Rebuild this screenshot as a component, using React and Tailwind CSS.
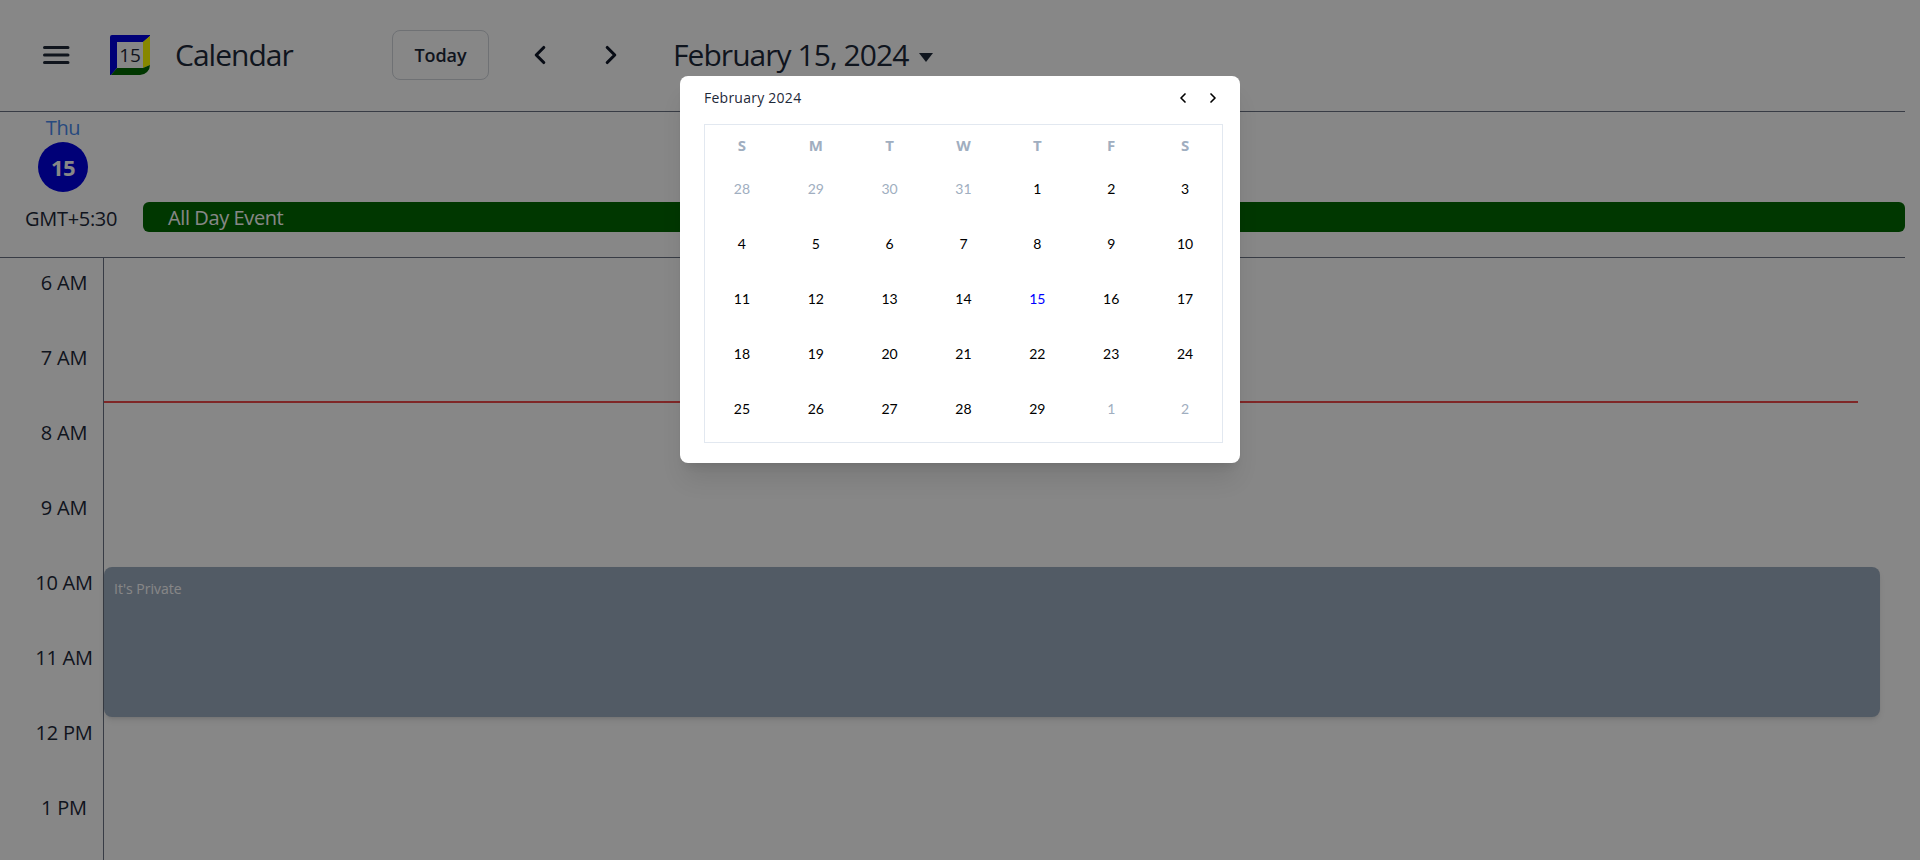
import React from "react";
import { ChevronLeft, ChevronRight } from "lucide-react";

const hours = ["6 AM", "7 AM", "8 AM", "9 AM", "10 AM", "11 AM", "12 PM", "1 PM"];
const dayNames = ["S", "M", "T", "W", "T", "F", "S"];

// muted = days outside of the current month
const days = [
  [28, 1], [29, 1], [30, 1], [31, 1], [1], [2], [3],
  [4], [5], [6], [7], [8], [9], [10],
  [11], [12], [13], [14], [15], [16], [17],
  [18], [19], [20], [21], [22], [23], [24],
  [25], [26], [27], [28], [29], [1, 1], [2, 1],
];

const Logo = () => (
  <svg width="40" height="40" viewBox="0 0 40 40" className="shrink-0">
    <path d="M2 0H40V1L33 7H7V33L1 40H0V2a2 2 0 0 1 2-2Z" fill="#0000e0" />
    <path d="M40 1V30L33 33V7Z" fill="#ffff00" />
    <path d="M7 33H33L40 30a10 10 0 0 1-10 10H1Z" fill="#006800" />
    <text x="20" y="27" textAnchor="middle" fontSize="19" fill="#1f2937" fontFamily="Open Sans, sans-serif">15</text>
  </svg>
);

const DatePopup = () => (
  <div className="absolute left-[680px] top-[76px] w-[560px] h-[387px] bg-white rounded-lg shadow-xl pl-6 pr-[17px]">
    <div className="flex items-center justify-between h-[48px] pr-[2px] pb-[4px]">
      <span className="text-sm text-gray-800 tracking-[0.25px]">February 2024</span>
      <div className="flex items-center gap-[14px] text-black">
        <ChevronLeft size={16} strokeWidth={2.5} />
        <ChevronRight size={16} strokeWidth={2.5} />
      </div>
    </div>
    <div className="h-[319px] border border-slate-200">
      <div className="grid grid-cols-7 h-[41px] items-center">
        {dayNames.map((d, i) => (
          <span key={i} className="text-center text-[15px] font-bold text-[#a0aec0]">{d}</span>
        ))}
      </div>
      <div className="grid grid-cols-7 auto-rows-[55px] items-start">
        {days.map(([num, muted], i) => (
          <span
            key={i}
            className={`text-center text-sm font-['Lato',sans-serif] leading-[20px] pt-[13px] ${
              num === 15 ? "text-[#0000ff]" : muted ? "text-[#a0aec0]" : "text-black"
            }`}
          >
            {num}
          </span>
        ))}
      </div>
    </div>
  </div>
);

const App = () => {
  return (
    <div className="relative h-[860px] overflow-hidden bg-white text-gray-800 font-['Open_Sans',sans-serif]">
      <div className="w-[1905px]">
        <header className="flex items-center h-[112px] border-b border-gray-500 pl-[40px] pb-[2px]">
          <svg width="30" height="30" viewBox="0 0 30 30" className="shrink-0" fill="none" stroke="#1f2937" strokeWidth="3" strokeLinecap="round">
            <path d="M4.5 7.5H28M4.5 15H28M4.5 22.500H28" />
          </svg>
          <div className="ml-[40px]"><Logo /></div>
          <h1 className="ml-[25px] w-[120px] text-[30px] tracking-[-1px]">Calendar</h1>
          <button className="ml-[97px] w-[97px] h-[50px] rounded-lg border border-gray-300 text-lg font-semibold tracking-[-0.1px]">Today</button>
          <div className="ml-[36px] flex items-center gap-[41px] text-gray-900">
            <ChevronLeft size={30} strokeWidth={2.5} />
            <ChevronRight size={30} strokeWidth={2.5} />
          </div>
          <h2 className="ml-[47px] text-[30px] tracking-[-0.95px]">February 15, 2024</h2>
          <span className="ml-[11px] mt-[6px] w-0 h-0 border-x-[7px] border-x-transparent border-t-[9px] border-t-gray-800" />
        </header>

        <section className="h-[146px] border-b border-gray-500">
          <div className="w-[126px] flex flex-col items-center pt-[2px]">
            <span className="text-[20px] leading-[28px] text-[#4b8cf0] tracking-[-0.4px]">Thu</span>
            <span className="flex items-center justify-center w-[50px] h-[50px] rounded-full bg-[#0000e0] text-white text-[22px] font-bold tracking-[-0.5px]">15</span>
          </div>
          <div className="flex items-center mt-[10px]">
            <span className="ml-[25px] w-[118px] pt-[3px] leading-[27px] text-[20px] tracking-[-0.3px]">GMT+5:30</span>
            <div className="flex-1 h-[30px] leading-[32px] pl-[25px] rounded-md bg-[#006800] text-white text-[20px] tracking-[-0.4px]">All Day Event</div>
          </div>
        </section>

        <section className="relative flex">
          <div className="w-[104px] shrink-0 border-r border-gray-500 h-[602px]">
            {hours.map((h) => (
              <div key={h} className="h-[75px] pl-[25px] text-center text-[20px] leading-[50px] tracking-[-0.2px]">{h}</div>
            ))}
          </div>
          <div className="absolute left-[104px] top-[143px] w-[1754px] h-[2px] bg-[#f04a4a]" />
          <div className="absolute left-[104px] top-[309px] w-[1776px] h-[150px] rounded-lg bg-[#9cacbf] shadow-md px-[10px] py-[12px] text-sm text-white">
            It's Private
          </div>
        </section>
      </div>

      <div className="absolute inset-0 bg-black/[0.47]" />
      <DatePopup />
    </div>
  );
};

export default App;
